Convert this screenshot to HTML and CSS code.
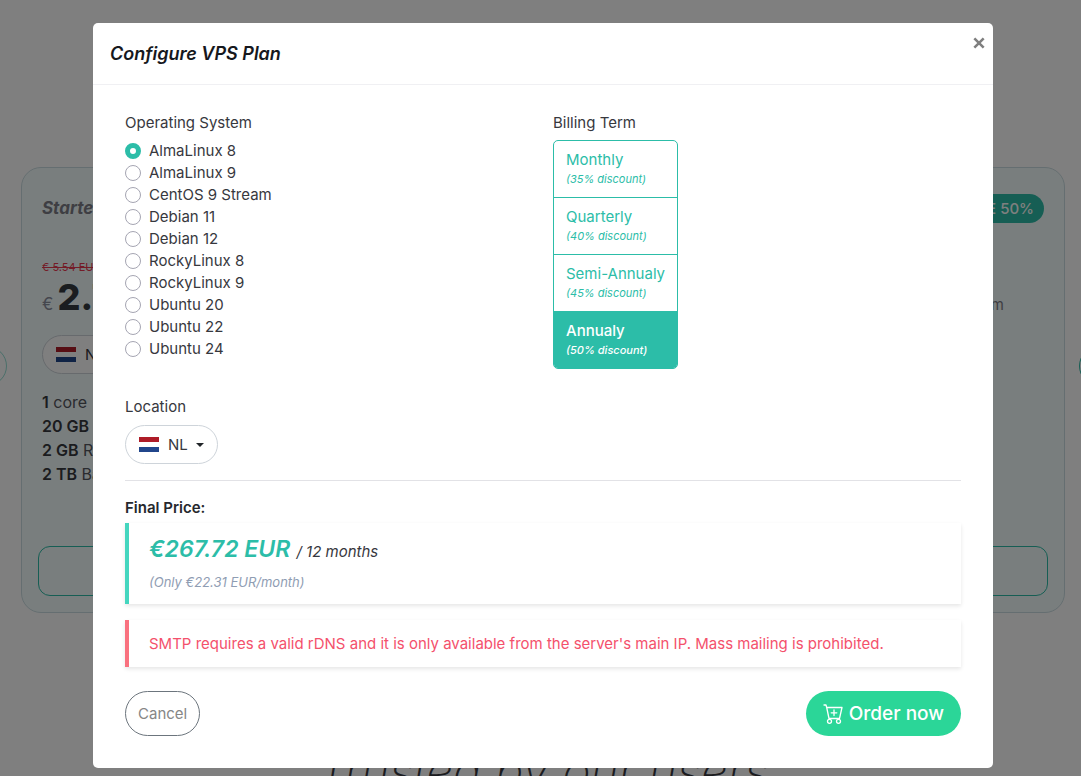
FILE: index.html
```html
<!DOCTYPE html>
<html lang="en">
<head>
  <meta charset="utf-8">
  <title>VPS Plans</title>
  <meta name="viewport" content="width=device-width, initial-scale=1.0">
  <link rel="stylesheet" href="styles.css">
</head>
<body>
  <!-- Plans carousel -->
  <main class="page">
    <button class="arrow arrow-prev" aria-label="Previous plan"></button>
    <section class="plan">
      <div class="plan-head">
        <h3>Starter</h3>
        <span class="badge">SAVE 50%</span>
      </div>
      <div class="plan-price">
        <div>
          <del>€ 5.54 EUR</del>
          <p><span class="currency">€</span> <strong>2.77</strong></p>
        </div>
        <span class="term">Long term</span>
      </div>
      <div class="location">
        <svg class="flag" viewBox="0 0 20 15" aria-hidden="true"><path fill="#fff" d="M0 0h20v15H0z"/><path fill="#ae1c28" d="M0 0h20v5H0z"/><path fill="#21468b" d="M0 10h20v5H0z"/></svg>
        <select aria-label="Plan location"><option>NL</option></select>
        <span class="caret"></span>
      </div>
      <ul class="specs">
        <li><b>1</b> core</li>
        <li><b>20 GB</b> SSD</li>
        <li><b>2 GB</b> RAM</li>
        <li><b>2 TB</b> Bandwidth</li>
      </ul>
      <button class="plan-order">Order</button>
    </section>
    <button class="arrow arrow-next" aria-label="Next plan"></button>
    <h2 class="trusted">Trusted by our users</h2>
  </main>

  <!-- Configure modal -->
  <div class="backdrop">
    <form class="modal" role="dialog" aria-labelledby="modal-title">
      <header class="modal-header">
        <h5 id="modal-title">Configure VPS Plan</h5>
        <button type="button" class="close" aria-label="Close">
          <svg viewBox="0 0 12 12" width="14" height="14"><path d="M2 2l8 8M10 2l-8 8" stroke="currentColor" stroke-width="2.2"/></svg>
        </button>
      </header>

      <div class="modal-body">
        <div class="options">
          <fieldset>
            <legend>Operating System</legend>
            <label class="os"><input type="radio" name="os" checked> AlmaLinux 8</label>
            <label class="os"><input type="radio" name="os"> AlmaLinux 9</label>
            <label class="os"><input type="radio" name="os"> CentOS 9 Stream</label>
            <label class="os"><input type="radio" name="os"> Debian 11</label>
            <label class="os"><input type="radio" name="os"> Debian 12</label>
            <label class="os"><input type="radio" name="os"> RockyLinux 8</label>
            <label class="os"><input type="radio" name="os"> RockyLinux 9</label>
            <label class="os"><input type="radio" name="os"> Ubuntu 20</label>
            <label class="os"><input type="radio" name="os"> Ubuntu 22</label>
            <label class="os"><input type="radio" name="os"> Ubuntu 24</label>
          </fieldset>

          <fieldset>
            <legend>Billing Term</legend>
            <div class="terms">
              <label><input type="radio" name="term"><span>Monthly</span><small>(35% discount)</small></label>
              <label><input type="radio" name="term"><span>Quarterly</span><small>(40% discount)</small></label>
              <label><input type="radio" name="term"><span>Semi-Annualy</span><small>(45% discount)</small></label>
              <label><input type="radio" name="term" checked><span>Annualy</span><small>(50% discount)</small></label>
            </div>
          </fieldset>
        </div>

        <label class="field-label" for="location">Location</label>
        <div class="location">
          <svg class="flag" viewBox="0 0 20 15" aria-hidden="true"><path fill="#fff" d="M0 0h20v15H0z"/><path fill="#ae1c28" d="M0 0h20v5H0z"/><path fill="#21468b" d="M0 10h20v5H0z"/></svg>
          <select id="location"><option>NL</option></select>
          <span class="caret"></span>
        </div>

        <hr>

        <p class="final">Final Price:</p>
        <div class="callout callout-price">
          <p><strong>€267.72 EUR</strong> <span>/ 12 months</span></p>
          <small>(Only €22.31 EUR/month)</small>
        </div>
        <div class="callout callout-danger">SMTP requires a valid rDNS and it is only available from the server's main IP. Mass mailing is prohibited.</div>

        <footer class="actions">
          <button type="button" class="btn-cancel">Cancel</button>
          <button type="submit" class="btn-order">
            <svg viewBox="0 0 20 20" width="20" height="20" fill="none" stroke="currentColor" stroke-width="1.3" stroke-linecap="round" stroke-linejoin="round" aria-hidden="true">
              <path d="M1 1h2l.7 2.5L6 14.500h10.500L19 3.500H3.700M11 6v5.600M8.200 8.800h5.600"/>
              <circle cx="6.500" cy="17.300" r="2"/>
              <circle cx="15.500" cy="17.300" r="2"/>
            </svg>
            Order now
          </button>
        </footer>
      </div>
    </form>
  </div>
</body>
</html>
```

FILE: styles.css
```css
* {
  box-sizing: border-box;
}
body {
  margin: 0;
  height: 100vh;
  overflow: hidden;
  font-family: Inter, "Liberation Sans", sans-serif;
  font-size: 15px;
  line-height: 24px;
  color: #37383e;
  background: #fff;
}
h2, h3, h5, p, ul, fieldset, legend {
  margin: 0;
  padding: 0;
}
fieldset {
  border: none;
  min-width: 0;
}
button, select {
  font: inherit;
  cursor: pointer;
}

/* Page behind the modal */
.page {
  position: relative;
  padding: 167px 16px 0 21px;
}
.plan {
  height: 446px;
  padding: 26px 16px 16px;
  display: flex;
  flex-direction: column;
  border: 1px solid #cbdde2;
  border-radius: 20px;
  background: #f3fdfd;
}
.plan-head, .plan-price {
  display: flex;
  justify-content: space-between;
  padding: 0 4px;
}
.plan-head h3 {
  font-size: 17px;
  line-height: 29px;
  font-style: italic;
  color: #7d7c86;
}
.badge {
  padding: 0 10px;
  border-radius: 15px;
  line-height: 29px;
  font-size: 15px;
  font-weight: 500;
  color: #fff;
  background: #2cbda8;
}
.plan-price {
  padding: 32px 44px 0 4px;
}
.plan-price del {
  display: block;
  font-size: 11px;
  color: #e8384f;
}
.plan-price p {
  line-height: 36px;
}
.plan-price strong {
  font-size: 36px;
  font-weight: 800;
  color: #343a40;
}
.currency {
  font-size: 17px;
  color: #8b8e9d;
}
.term {
  margin-top: 38px;
  color: #7d7c86;
}
.plan .location {
  margin: 12px 4px 16px;
}
.specs {
  padding: 0 4px;
  font-size: 16px;
  color: #55565e;
  list-style: none;
}
.specs b {
  font-weight: 600;
  color: #37383e;
}
.plan-order {
  height: 50px;
  margin-top: auto;
  border: 1px solid #2cbda8;
  border-radius: 12px;
  color: #2cbda8;
  background: none;
}
.arrow {
  position: absolute;
  top: 346px;
  width: 40px;
  height: 40px;
  border: 1px solid #2cbda8;
  border-radius: 50%;
  background: none;
}
.arrow-prev {
  left: -33px;
  opacity: .5;
}
.arrow-next {
  right: -38px;
}
.trusted {
  margin-top: 130px;
  font-size: 48px;
  line-height: 56px;
  font-weight: 200;
  font-style: italic;
  text-align: center;
}

/* Modal */
.backdrop {
  position: fixed;
  inset: 0;
  overflow: hidden;
  padding: 23px 0 8px 5px;
  background: rgba(0, 0, 0, .5);
}
.modal {
  max-width: 900px;
  margin: 0 auto;
  border-radius: 5px;
  background: #fff;
}
.modal-header {
  display: flex;
  justify-content: space-between;
  align-items: flex-start;
  padding: 16px 7px 15px 17px;
  border-bottom: 1px solid #f0f0f3;
}
.modal-header h5 {
  font-size: 18px;
  line-height: 30px;
  font-weight: 600;
  font-style: italic;
  color: #16181d;
}
.close {
  display: flex;
  padding: 0;
  margin-top: -3px;
  border: none;
  color: #7f7f7f;
  background: none;
}
.modal-body {
  padding: 26px 32px 32px;
}
.options {
  display: grid;
  grid-template-columns: 1fr 1fr;
  gap: 20px;
  margin-bottom: 26px;
}
legend, .field-label {
  display: block;
  line-height: 24px;
}
.os {
  display: flex;
  align-items: center;
  gap: 8px;
  line-height: 22px;
}
legend + .os {
  margin-top: 5px;
}
.os input {
  appearance: none;
  width: 16px;
  height: 16px;
  margin: 0;
  border: 1px solid #a5a5b2;
  border-radius: 50%;
  background: #fff;
}
.os input:checked {
  border: 5px solid #2cbda8;
}
.terms {
  display: inline-flex;
  flex-direction: column;
  margin-top: 5px;
  border: 1px solid #2cbda8;
  border-radius: 5px;
  overflow: hidden;
}
.terms label {
  position: relative;
  height: 57px;
  padding: 9px 12px;
  color: #2cbda8;
  cursor: pointer;
}
.terms label + label {
  border-top: 1px solid #2cbda8;
}
.terms label:first-child {
  height: 56px;
}
.terms input {
  position: absolute;
  opacity: 0;
  margin: 0;
}
.terms span, .terms small {
  display: block;
  line-height: 20px;
}
.terms small {
  font-size: 11px;
  line-height: 18px;
  font-style: italic;
}
.terms label:has(:checked) {
  color: #fff;
  font-weight: 500;
  background: #2cbda8;
}
.location {
  display: flex;
  align-items: center;
  align-self: flex-start;
  width: fit-content;
  height: 39px;
  padding: 0 13px;
  border: 1px solid #ced4da;
  border-radius: 20px;
  background: #fff;
}
.field-label + .location {
  margin-top: 6px;
}
.flag {
  width: 20px;
  height: 15px;
  margin-right: 9px;
}
.location select {
  appearance: none;
  padding: 0;
  margin-right: 8px;
  border: none;
  color: inherit;
  background: none;
}
.caret {
  border: 4px solid transparent;
  border-top-color: #212529;
  border-bottom: none;
}
hr {
  margin: 16px 0 15px;
  border: none;
  border-top: 1px solid #e2e2e6;
}
.final {
  font-size: 15px;
  font-weight: 600;
  color: #26282d;
}
.callout {
  padding: 12px 20px;
  border-left: 4px solid #45d6bf;
  line-height: 23px;
  box-shadow: 0 2px 4px rgba(0, 0, 0, .1);
}
.callout-price {
  margin-top: 3px;
}
.callout-price p {
  line-height: 28px;
  font-style: italic;
}
.callout-price strong {
  font-size: 23px;
  font-weight: 600;
  color: #2cbda8;
}
.callout-price span {
  margin-left: 2px;
  font-size: 15px;
}
.callout-price small {
  display: block;
  margin-top: 6px;
  font-size: 13px;
  line-height: 20px;
  font-style: italic;
  color: #8f9db3;
}
.callout-danger {
  margin-top: 16px;
  border-color: #f9717f;
  color: #f4516c;
}
.actions {
  display: flex;
  justify-content: space-between;
  margin-top: 24px;
}
.actions button {
  height: 45px;
  border-radius: 23px;
}
.btn-cancel {
  padding: 0 12px;
  border: 1px solid #6c757d;
  color: #868686;
  background: #fff;
}
.btn-order {
  display: flex;
  align-items: center;
  gap: 6px;
  padding: 0 17px;
  border: none;
  font-size: 19px;
  font-weight: 500;
  color: #fff;
  background: #2bd698;
}
```
